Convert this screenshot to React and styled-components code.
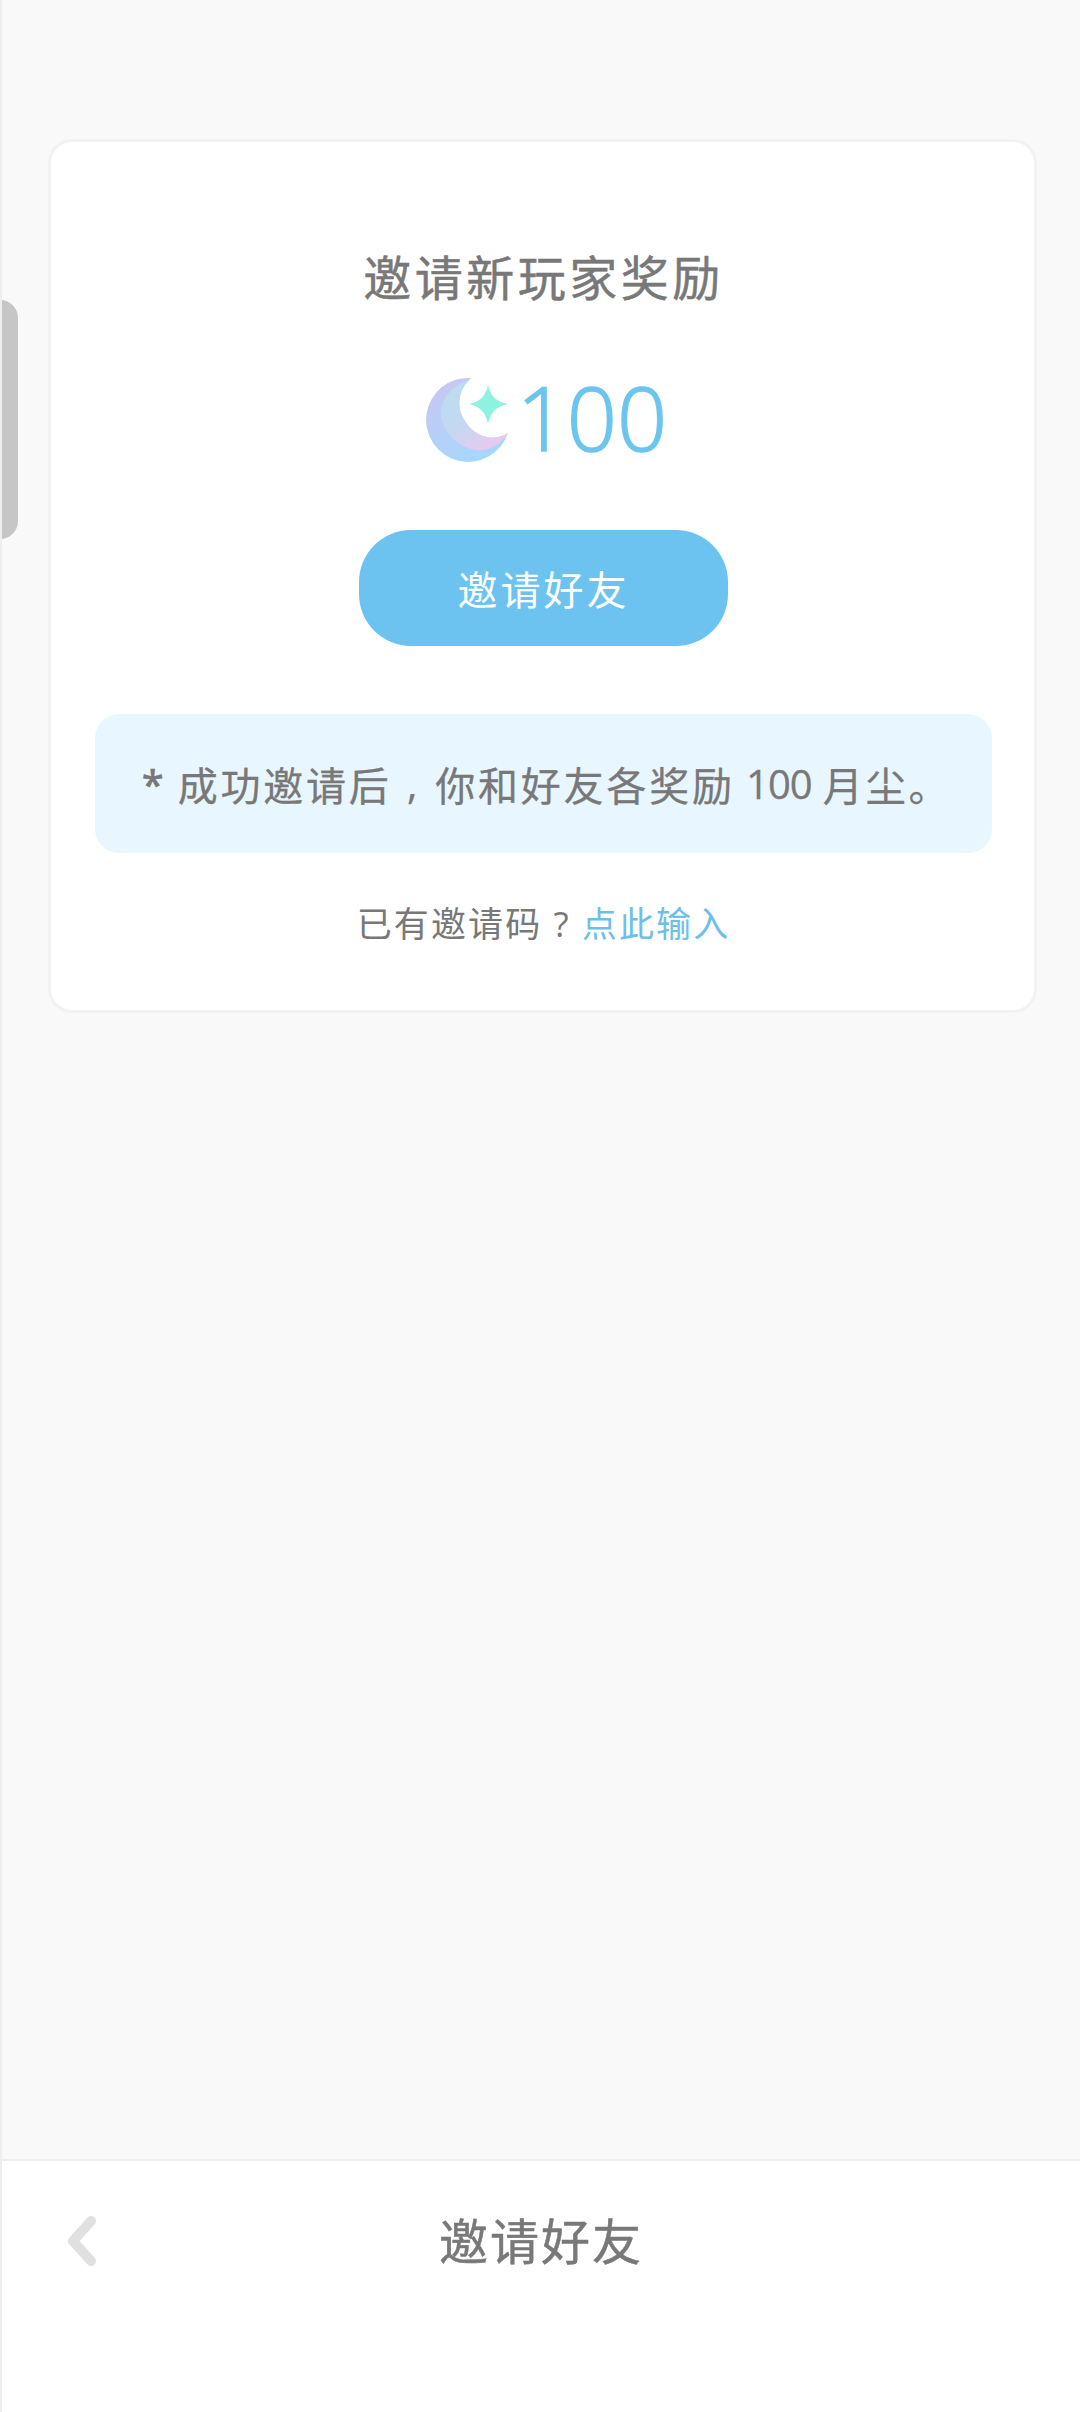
import styled, { createGlobalStyle } from "styled-components";

const GlobalStyle = createGlobalStyle`
  html, body {
    margin: 0;
    padding: 0;
  }
  body {
    font-family: "Open Sans", "Noto Sans CJK SC", sans-serif;
    background: #f9f9f9;
  }
`;

const Page = styled.div`
  position: relative;
  width: 1080px;
  height: 2412px;
  box-sizing: border-box;
  border-left: 2px solid #eeeeee;
  display: flex;
  flex-direction: column;
  overflow: hidden;
`;

const Main = styled.main`
  flex: 1;
  padding: 139px 43px 0 46px;
`;

const SideTab = styled.div`
  position: absolute;
  left: -2px;
  top: 300px;
  width: 18px;
  height: 239px;
  background: #c6c6c6;
  border-radius: 0 18px 18px 0;
`;

const Card = styled.section`
  box-sizing: border-box;
  height: 874px;
  background: #ffffff;
  border: 3px solid #f2f2f2;
  border-radius: 24px;
  padding: 106px 42px 0 44px;
  display: flex;
  flex-direction: column;
  align-items: center;
`;

const Title = styled.h1`
  margin: 0;
  font-size: 48px;
  line-height: 60px;
  font-weight: 400;
  letter-spacing: 3.5px;
  color: #787878;
  -webkit-text-stroke: 0.5px #787878;
`;

const Reward = styled.div`
  margin-top: 68px;
  height: 88px;
  padding-left: 5px;
  display: flex;
  align-items: center;
  gap: 4px;
`;

const Amount = styled.span`
  margin-bottom: 6px;
  font-size: 88px;
  line-height: 88px;
  font-weight: 300;
  color: #6cc5ef;
  -webkit-text-stroke: 1.5px #6cc5ef;
`;

const InviteButton = styled.button`
  margin-top: 66px;
  width: 369px;
  height: 116px;
  border: 0;
  border-radius: 52px;
  background: #6cc3ef;
  color: #ffffff;
  font-family: inherit;
  font-size: 40px;
  letter-spacing: 3px;
`;

const Notice = styled.div`
  margin-top: 68px;
  align-self: stretch;
  box-sizing: border-box;
  height: 139px;
  padding-left: 6px;
  border-radius: 24px;
  background: #e8f7ff;
  display: flex;
  align-items: center;
  justify-content: center;
  white-space: pre;
  font-size: 40px;
  letter-spacing: 2.8px;
  word-spacing: -2px;
  color: #787878;
  -webkit-text-stroke: 0.3px #787878;
`;

const Mark = styled.span`
  font-weight: 600;
`;

const NoticeNumber = styled.span`
  letter-spacing: -1px;
`;

const Comma = styled.span`
  margin: 0 4px;
`;

const Hint = styled.p`
  margin: 46px 0 0;
  font-size: 35px;
  line-height: 50px;
  letter-spacing: 2.1px;
  color: #787878;
`;

const HintLink = styled.a`
  color: #6cc0e8;
`;

const BottomBar = styled.nav`
  height: 253px;
  box-sizing: border-box;
  background: #ffffff;
  border-top: 2px solid #eeeeee;
  padding-top: 46px;
  display: grid;
  grid-template-columns: 1fr auto 1fr;
  align-items: start;
`;

const BackIcon = styled.svg`
  display: block;
  margin-left: 64px;
  width: 36px;
  height: 68px;
`;

const BarTitle = styled.h2`
  margin: 0;
  font-size: 49px;
  line-height: 68px;
  font-weight: 400;
  letter-spacing: 2px;
  color: #787878;
  -webkit-text-stroke: 0.5px #787878;
`;

function MoonIcon() {
  return (
    <svg width="88" height="88" viewBox="424 376 88 88">
      <defs>
        <linearGradient id="moonOuter" x1="0.1" y1="0" x2="0.6" y2="1">
          <stop offset="0" stopColor="#cbc5f0" />
          <stop offset="1" stopColor="#a6d8fd" />
        </linearGradient>
        <linearGradient id="moonInner" x1="0.1" y1="0" x2="0.85" y2="1">
          <stop offset="0" stopColor="#b8dfee" />
          <stop offset="0.5" stopColor="#c4d8f2" />
          <stop offset="1" stopColor="#eec6f0" />
        </linearGradient>
      </defs>
      <path d="M470 378 A42 42 0 1 0 507 433 C490 444 470 434 462 418 C455 405 458 388 470 378Z" fill="url(#moonOuter)" />
      <path d="M470 379 C450 385 438 402 440 415 C442 435 462 452 482 450 C492 449 502 441 507 433 C490 444 470 434 462 418 C455 405 458 388 470 379Z" fill="url(#moonInner)" />
      <path d="M487 385 Q490 401 507 404 Q490 407 487 424 Q484 407 468 404 Q484 401 487 385Z" fill="#8df3df" />
    </svg>
  );
}

export default function App() {
  return (
    <Page>
      <GlobalStyle />
      <SideTab />
      <Main>
        <Card>
          <Title>邀请新玩家奖励</Title>
          <Reward>
            <MoonIcon />
            <Amount>100</Amount>
          </Reward>
          <InviteButton>邀请好友</InviteButton>
          <Notice>
            <Mark>*</Mark> 成功邀请后 <Comma>,</Comma> 你和好友各奖励 <NoticeNumber>100</NoticeNumber> 月尘。
          </Notice>
          <Hint>
            已有邀请码 ? <HintLink>点此输入</HintLink>
          </Hint>
        </Card>
      </Main>
      <BottomBar>
        <BackIcon viewBox="0 0 36 68">
          <path d="M25 14 L7 34 L25 54" fill="none" stroke="#e0e0e0" strokeWidth="10" strokeLinecap="round" strokeLinejoin="round" />
        </BackIcon>
        <BarTitle>邀请好友</BarTitle>
      </BottomBar>
    </Page>
  );
}
